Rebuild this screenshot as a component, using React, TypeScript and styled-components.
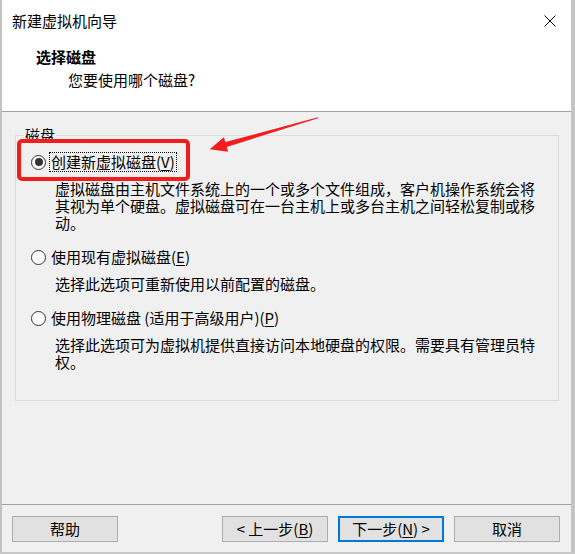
import React from "react";
import styled, { createGlobalStyle } from "styled-components";

const GlobalStyle = createGlobalStyle`
  html, body {
    margin: 0;
    padding: 0;
    background: #ffffff;
  }
  body {
    font-family: "Noto Sans CJK SC", "Noto Sans", sans-serif;
    font-size: 15px;
    color: #000;
  }
`;

const Window = styled.div`
  position: relative;
  box-sizing: border-box;
  width: 575px;
  height: 554px;
  display: flex;
  flex-direction: column;
  border-left: 2px solid #c2c2c2;
  border-right: 4px solid #c4c4c4;
  border-bottom: 2px solid #c8c8c8;
  background: #f0f0f0;
`;

const Header = styled.div`
  height: 111px;
  flex: none;
  background: #ffffff;
  border-bottom: 1px solid #a0a0a0;
  display: flex;
  flex-direction: column;
`;

const TitleBar = styled.div`
  height: 42px;
  display: flex;
  align-items: center;
  justify-content: space-between;
  padding: 0 15px 0 10px;
`;

const Title = styled.span`
  font-size: 15px;
  line-height: 18px;
`;

const CloseButton = styled.span`
  display: flex;
  width: 12px;
  height: 12px;
`;

const Heading = styled.div`
  margin-top: 6px;
  padding-left: 34px;
  font-weight: 700;
  line-height: 18px;
`;

const SubHeading = styled.div`
  margin-top: 5px;
  padding-left: 66px;
  line-height: 18px;
`;

const Body = styled.div`
  flex: 1;
  padding: 23px 12px 0 13px;
`;

const Group = styled.div`
  position: relative;
  box-sizing: border-box;
  width: 544px;
  height: 266px;
  border: 1px solid #dcdcdc;
  padding: 16px 0 0 15px;
`;

const GroupLabel = styled.span`
  position: absolute;
  top: -10px;
  left: 8px;
  padding: 0 1px;
  line-height: 18px;
  background: #f0f0f0;
`;

const Option = styled.div<{ $first?: boolean }>`
  margin-top: ${(p) => (p.$first ? 0 : 16)}px;
`;

const OptionRow = styled.div`
  height: 20px;
  display: flex;
  align-items: center;
`;

const Radio = styled.span<{ $checked?: boolean }>`
  box-sizing: border-box;
  width: 15px;
  height: 15px;
  border-radius: 50%;
  border: 1px solid #333;
  background: #fff;
  display: flex;
  align-items: center;
  justify-content: center;
  flex: none;
  &::after {
    content: "";
    width: 8px;
    height: 8px;
    border-radius: 50%;
    background: ${(p) => (p.$checked ? "#333" : "transparent")};
  }
`;

const OptionLabel = styled.span<{ $focused?: boolean }>`
  margin-left: 4px;
  padding: 0 1px;
  line-height: 18px;
  outline: ${(p) => (p.$focused ? "1px dotted #000" : "none")};
  white-space: nowrap;
`;

const Description = styled.div`
  margin-top: 8px;
  padding-left: 24px;
  width: 484px;
  line-height: 17px;
`;

const Key = styled.span`
  text-decoration: underline;
  text-underline-offset: 2px;
`;

const Footer = styled.div`
  height: 48px;
  flex: none;
  box-sizing: border-box;
  border-top: 1px solid #a0a0a0;
  display: flex;
  align-items: flex-start;
  gap: 10px;
  padding: 11px 11px 0 10px;
`;

const Button = styled.button<{ $primary?: boolean; $pushRight?: boolean }>`
  box-sizing: border-box;
  width: 106px;
  height: 26px;
  margin-right: ${(p) => (p.$pushRight ? "auto" : "0")};
  background: #e1e1e1;
  border: ${(p) => (p.$primary ? "2px solid #0078d7" : "1px solid #adadad")};
  font-family: inherit;
  font-size: 15px;
  line-height: 18px;
  color: #000;
  padding: 0;
  display: flex;
  align-items: center;
  justify-content: center;
`;

const Overlay = styled.svg`
  position: absolute;
  left: -2px;
  top: 0;
  width: 575px;
  height: 554px;
  pointer-events: none;
`;

export default function App() {
  return (
    <>
      <GlobalStyle />
      <Window>
        <Header>
          <TitleBar>
            <Title>新建虚拟机向导</Title>
            <CloseButton>
              <svg width="12" height="12" viewBox="0 0 12 12">
                <path d="M0.5 0.5 L11.5 11.5 M11.5 0.5 L0.5 11.5" stroke="#000" strokeWidth="1" />
              </svg>
            </CloseButton>
          </TitleBar>
          <Heading>选择磁盘</Heading>
          <SubHeading>您要使用哪个磁盘?</SubHeading>
        </Header>
        <Body>
          <Group>
            <GroupLabel>磁盘</GroupLabel>
            <Option $first>
              <OptionRow>
                <Radio $checked />
                <OptionLabel $focused>
                  创建新虚拟磁盘(<Key>V</Key>)
                </OptionLabel>
              </OptionRow>
              <Description>
                虚拟磁盘由主机文件系统上的一个或多个文件组成，客户机操作系统会将其视为单个硬盘。虚拟磁盘可在一台主机上或多台主机之间轻松复制或移动。
              </Description>
            </Option>
            <Option>
              <OptionRow>
                <Radio />
                <OptionLabel>
                  使用现有虚拟磁盘(<Key>E</Key>)
                </OptionLabel>
              </OptionRow>
              <Description>选择此选项可重新使用以前配置的磁盘。</Description>
            </Option>
            <Option>
              <OptionRow>
                <Radio />
                <OptionLabel>
                  使用物理磁盘 (适用于高级用户)(<Key>P</Key>)
                </OptionLabel>
              </OptionRow>
              <Description>
                选择此选项可为虚拟机提供直接访问本地硬盘的权限。需要具有管理员特权。
              </Description>
            </Option>
          </Group>
        </Body>
        <Footer>
          <Button $pushRight>帮助</Button>
          <Button>
            &lt; 上一步(<Key>B</Key>)
          </Button>
          <Button $primary>
            下一步(<Key>N</Key>) &gt;
          </Button>
          <Button>取消</Button>
        </Footer>
        <Overlay viewBox="0 0 575 554">
          <rect x="19" y="141" width="169" height="38" rx="3" ry="3" fill="none" stroke="#f21d1d" strokeWidth="4" />
          <polygon
            points="209.7,149.3 223.9,137.3 225.3,142.1 317.9,117.3 318.1,118.3 226.7,146.9 228.1,151.7"
            fill="#f21d1d"
          />
        </Overlay>
      </Window>
    </>
  );
}
